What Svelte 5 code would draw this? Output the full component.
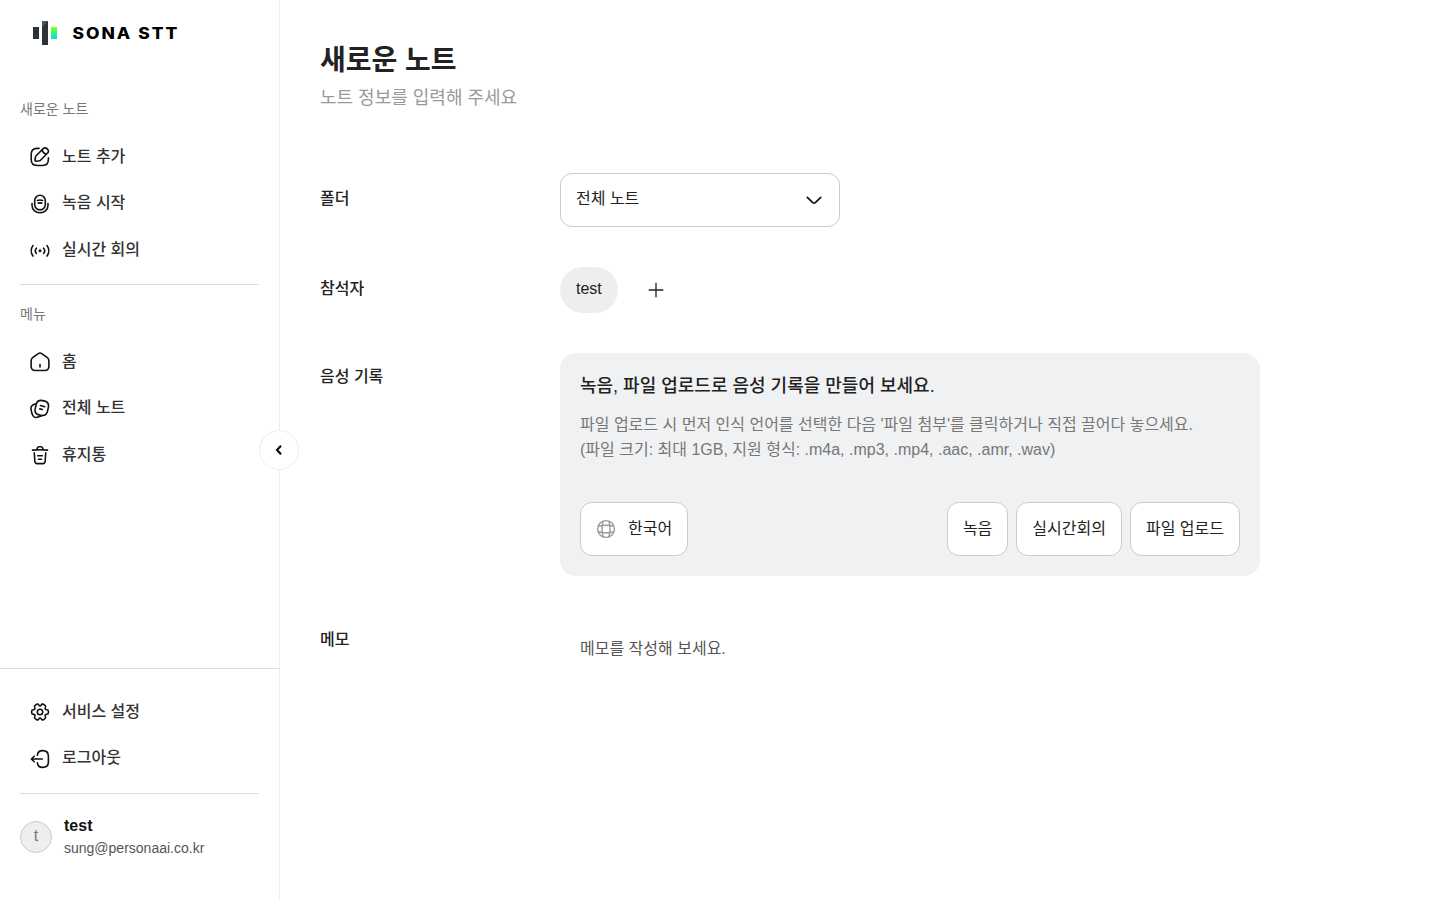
<script>
  const create = [
    { icon: 'edit', label: '노트 추가' },
    { icon: 'mic', label: '녹음 시작' },
    { icon: 'live', label: '실시간 회의' }
  ];
  const menu = [
    { icon: 'home', label: '홈' },
    { icon: 'notes', label: '전체 노트' },
    { icon: 'trash', label: '휴지통' }
  ];
  const account = [
    { icon: 'gear', label: '서비스 설정' },
    { icon: 'logout', label: '로그아웃' }
  ];
</script>

{#snippet glyph(name)}
  <svg class="icon" width="20" height="20" viewBox="0 0 20 20" fill="none" stroke="#111" stroke-width="1.6" stroke-linecap="round" stroke-linejoin="round">
    {#if name === 'edit'}
      <path d="M9 1.400H7.200C3 1.400 1.200 3.200 1.200 7.300v5.200c0 4.200 1.800 6 6 6h5.200c4.200 0 6-1.800 6-6V10.800" />
      <path d="M13 1.900 6.100 8.800c-.3.300-.5.800-.6 1.200l-.5 2.900c-.1.900.5 1.500 1.400 1.400l2.900-.5c.4-.1.900-.3 1.200-.6l6.900-6.900c1.100-1.100 1.700-2.500 0-4.200-1.700-1.700-3.200-1.300-4.400-.2Z" />
      <path d="M12 3.100c.6 2 2.100 3.500 4.200 4.200" />
    {:else if name === 'mic'}
      <rect x="4.700" y="1.300" width="10.600" height="14.600" rx="5.300" />
      <path d="M2 9.500v1.700c0 4.300 3.400 7.500 8 7.500s8-3.200 8-7.500V9.500M7.400 6.400c1.700-.6 3.500-.6 5.200 0M8.200 9.100c1.200-.3 2.400-.3 3.600 0" />
    {:else if name === 'live'}
      <path d="M3 5.600c-2.300 3-2.300 7.400 0 10.400M17 5.600c2.300 3 2.300 7.400 0 10.400M6.400 8.200c-1.300 1.500-1.300 3.700 0 5.200M13.600 8.200c1.300 1.500 1.300 3.700 0 5.200" />
      <circle cx="10" cy="10.800" r="1.500" fill="#111" stroke="none" />
    {:else if name === 'home'}
      <path d="M8.300 1.600 2.900 5.300C1.500 6.300 1.100 7.200 1.100 9v5.200c0 2.900 1.500 4.300 4.400 4.300h9c2.900 0 4.400-1.400 4.400-4.300V9c0-1.800-.4-2.700-1.800-3.700l-5.400-3.700c-1.200-.8-2.200-.8-3.400 0ZM10 15v-2.500" />
    {:else if name === 'notes'}
      <path d="m18.500 7.600-.9 4.200c-.8 3.600-2.400 5-5.600 4.700a8 8 0 0 1-1.600-.3L9 15.900c-3.500-.8-4.600-2.600-3.800-6.200l.8-3.600c.2-.7.400-1.300.6-1.900C7.700 1.600 9.600.9 12.600 1.600l1.400.3c3.600.8 4.900 2.200 4.500 5.700Z" />
      <path d="M12 16.400c-.6.500-1.400.8-2.500 1.200l-1.300.4c-3.300 1.100-5.100.2-6.200-3.200L1.300 11.500C.2 8.100 1.200 6.300 4.500 5.200l1.600-.5M10.500 6.600l4.200 1.100M9.800 9.900l2.500.6" />
    {:else if name === 'trash'}
      <path d="M2.500 5.100c5-.5 10-.5 15 0M7 4.500l.3-1.300c.2-.9.500-1.400 1.700-1.400h2c1.200 0 1.500.6 1.700 1.400l.3 1.300M15.700 7.700l-.5 8.300c-.1 1.500-.3 2.600-2.500 2.600H7.300c-2.200 0-2.400-1.100-2.500-2.600l-.5-8.300M8.500 14.200h3M7.700 10.700h4.600" />
    {:else if name === 'gear'}
      <circle cx="10" cy="10" r="2.700" />
      <path d="M1.700 10.700V9.300c0-.9.700-1.600 1.600-1.600 1.500 0 2.200-1.100 1.400-2.400-.4-.8-.2-1.700.6-2.200l1.400-.8c.7-.4 1.600-.2 2 .5l.1.200c.8 1.300 1.800 1.300 2.500 0l.1-.2c.4-.7 1.300-.9 2-.5l1.400.8c.8.500 1 1.400.6 2.200-.8 1.300-.1 2.400 1.400 2.400.9 0 1.600.7 1.600 1.600v1.400c0 .9-.7 1.600-1.600 1.600-1.500 0-2.200 1.100-1.400 2.400.4.800.2 1.700-.6 2.200l-1.400.8c-.7.400-1.600.2-2-.5l-.1-.2c-.8-1.300-1.800-1.300-2.500 0l-.1.200c-.4.700-1.300.9-2 .5l-1.400-.8c-.8-.5-1-1.400-.6-2.200.8-1.300.1-2.400-1.400-2.400-.9 0-1.600-.7-1.600-1.600Z" />
    {:else}
      <path d="M7.400 6.300c.3-3.300 1.800-4.700 5.100-4.700h.2c3.900 0 5.700 1.700 5.700 5.600v5.600c0 3.900-1.800 5.600-5.700 5.600h-.2c-3.200 0-4.800-1.400-5.100-4.500M12.300 10H1.500M4.200 7.200 1.400 10l2.800 2.800" />
    {/if}
  </svg>
{/snippet}

{#snippet list(items)}
  <ul>
    {#each items as item}
      <li>{@render glyph(item.icon)}<span>{item.label}</span></li>
    {/each}
  </ul>
{/snippet}

<div class="page">
  <aside>
    <div class="logo">
      <svg width="160" height="28" viewBox="0 0 160 28">
        <defs>
          <linearGradient id="bar" x1="0" y1="0" x2="0" y2="1">
            <stop offset="0" stop-color="#8cff0a" />
            <stop offset=".5" stop-color="#38f07a" />
            <stop offset="1" stop-color="#08dcf5" />
          </linearGradient>
        </defs>
        <path fill="#2d3339" d="M1 8h6v12H1zM10 2h6v24h-6z" />
        <path fill="#4c565e" d="M10 2h6l-6 6z" />
        <path fill="url(#bar)" d="M19 8h6v12h-6z" />
        <text x="40.400" y="20" textLength="107" lengthAdjust="spacingAndGlyphs">SONA STT</text>
      </svg>
    </div>
    <section class="first">
      <h2>새로운 노트</h2>
      {@render list(create)}
    </section>
    <section class="second">
      <h2>메뉴</h2>
      {@render list(menu)}
    </section>
    <div class="bottom">
      {@render list(account)}
      <div class="user">
        <div class="avatar">t</div>
        <div>
          <strong>test</strong>
          <p>sung@personaai.co.kr</p>
        </div>
      </div>
    </div>
    <button class="fold" aria-label="메뉴 접기">
      <svg width="12" height="12" viewBox="0 0 12 12" fill="none" stroke="#000" stroke-width="2"><path d="M8 1.700 4 6l4 4.300" /></svg>
    </button>
  </aside>

  <main>
    <h1>새로운 노트</h1>
    <p class="sub">노트 정보를 입력해 주세요</p>
    <div class="form">
      <div class="row">
        <div class="name folder">폴더</div>
        <div class="select">
          <span>전체 노트</span>
          <svg width="20" height="20" viewBox="0 0 20 20" fill="none" stroke="#111" stroke-width="1.700" stroke-linecap="round"><path d="m3.300 7.300 5.400 5.300c.8.700 1.800.7 2.600 0l5.400-5.300" /></svg>
        </div>
      </div>
      <div class="row">
        <div class="name people">참석자</div>
        <div class="chip">test</div>
        <svg class="plus" width="16" height="16" viewBox="0 0 16 16" stroke="#222" stroke-width="1.300"><path d="M.7 8h14.600M8 .7v14.600" /></svg>
      </div>
      <div class="row">
        <div class="name voice">음성 기록</div>
        <div class="card">
          <h3>녹음, 파일 업로드로 음성 기록을 만들어 보세요.</h3>
          <p>파일 업로드 시 먼저 인식 언어를 선택한 다음 '파일 첨부'를 클릭하거나 직접 끌어다 놓으세요.<br />(파일 크기: 최대 1GB, 지원 형식: .m4a, .mp3, .mp4, .aac, .amr, .wav)</p>
          <div class="actions">
            <button class="btn lang">
              <svg width="20" height="20" viewBox="0 0 20 20" fill="none" stroke="#999" stroke-width="1.400"><circle cx="10" cy="10" r="8.400" /><path d="M7.200 1.900c-1.600 5.300-1.600 10.900 0 16.200M12.800 1.900c1.600 5.300 1.600 10.900 0 16.200M1.900 7.200c5.300-1.300 10.900-1.300 16.200 0M1.900 12.800c5.300 1.300 10.900 1.300 16.200 0" /></svg>
              <span>한국어</span>
            </button>
            <button class="btn"><span>녹음</span></button>
            <button class="btn"><span>실시간회의</span></button>
            <button class="btn"><span>파일 업로드</span></button>
          </div>
        </div>
      </div>
      <div class="row">
        <div class="name memo">메모</div>
        <div class="memo-text">메모를 작성해 보세요.</div>
      </div>
    </div>
  </main>
</div>

<style>
  :global(body) { background: #fff; }
  .page, .page * { box-sizing: border-box; }
  .page {
    display: flex;
    height: 900px;
    overflow: hidden;
    font: 400 16px/24px "Liberation Sans", "Noto Sans CJK KR", sans-serif;
    color: #222;
  }
  h1, h2, h3, p, ul { margin: 0; padding: 0; }
  button { font: inherit; color: inherit; }
  svg { display: block; flex: none; }
  aside {
    position: relative;
    display: flex;
    flex-direction: column;
    width: 280px;
    flex: none;
    border-right: 1px solid #eee;
  }
  .logo { padding: 19px 0 0 32px; height: 89px; }
  .logo text {
    font: 800 15.500px Inter, sans-serif;
    letter-spacing: 1.800px;
    fill: #000;
  }
  section { margin: 0 20px; }
  h2 { font-size: 14px; line-height: 41px; height: 44.700px; font-weight: 400; color: #777; }
  .first { height: 195px; }
  .second { border-top: 1px solid #ddd; padding-top: 9px; }
  ul { list-style: none; }
  li {
    display: flex;
    align-items: center;
    gap: 12px;
    height: 46.660px;
    padding-left: 10px;
    font-weight: 500;
    color: #333;
  }
  .bottom { margin-top: auto; height: 232px; border-top: 1px solid #ddd; padding: 19.700px 20px 0; }
  li span { padding-bottom: 0.600px; }
  .user {
    display: flex;
    gap: 12px;
    margin-top: 10.800px;
    padding-top: 20px;
    border-top: 1px solid #ddd;
  }
  .avatar {
    width: 32px;
    height: 32px;
    margin-top: 7px;
    border: 1px solid #ccc;
    border-radius: 50%;
    background: #eee;
    color: #777;
    line-height: 28px;
    text-align: center;
  }
  strong { display: block; color: #111; line-height: 24px; }
  .user p { font-size: 14px; line-height: 20px; color: #555; }
  .fold {
    position: absolute;
    top: 430px;
    right: -20px;
    display: grid;
    place-items: center;
    width: 40px;
    height: 40px;
    padding: 0;
    border: 1px solid #eee;
    border-radius: 50%;
    background: #fff;
  }
  main { padding: 41px 0 0 40px; }
  h1 { font-size: 28px; line-height: 40px; font-weight: 700; }
  .sub { font-size: 18px; line-height: 34px; color: #999; }
  .form { display: flex; flex-direction: column; gap: 40px; margin-top: 58px; }
  .row { display: flex; align-items: flex-start; }
  .name { width: 240px; flex: none; font-weight: 500; }
  .folder { padding-top: 14px; }
  .people { padding-top: 10px; }
  .voice { padding-top: 12px; }
  .memo { padding-top: 12px; }
  .select {
    display: flex;
    align-items: center;
    justify-content: space-between;
    width: 280px;
    height: 54px;
    padding: 0 15px;
    border: 1px solid #ccc;
    border-radius: 12px;
  }
  .select span { padding-bottom: 3px; }
  .btn span { padding-bottom: 1px; }
  .chip { height: 46px; padding: 10px 16px; border-radius: 23px; background: #eee; }
  .plus { margin: 15px 0 0 30px; }
  .card { width: 700px; height: 223px; padding: 20px; border-radius: 16px; background: #f0f1f3; }
  h3 { font-size: 18px; line-height: 26px; font-weight: 500; }
  .card p { margin-top: 13px; line-height: 25px; color: #777; }
  .actions { display: flex; gap: 8px; margin-top: 40px; }
  .btn {
    display: flex;
    align-items: center;
    height: 54px;
    padding: 0 15px;
    border: 1px solid #ccc;
    border-radius: 12px;
    background: #fff;
  }
  .lang { gap: 12px; margin-right: auto; }
  .memo-text { padding: 21px 20px; color: #555; }
</style>
